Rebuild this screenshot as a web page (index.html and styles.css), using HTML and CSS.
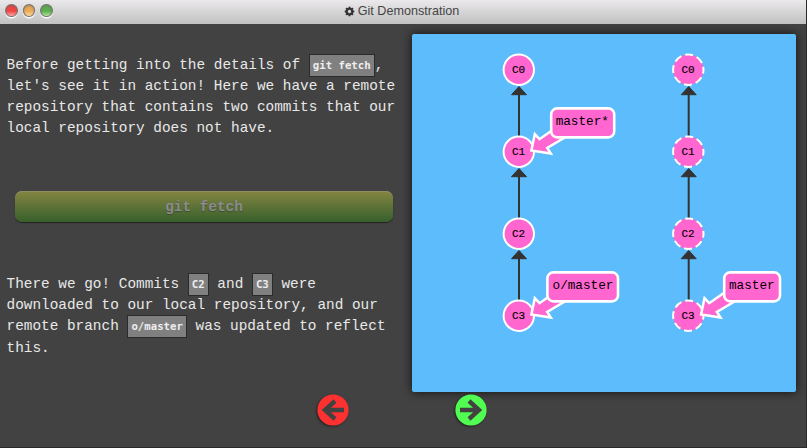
FILE: index.html
```html
<!DOCTYPE html>
<html lang="en">
<head>
<meta charset="utf-8">
<title>Git Demonstration</title>
<link rel="stylesheet" href="styles.css">
</head>
<body>
<div class="window">
  <header class="titlebar">
    <div class="lights"><i class="light red"></i><i class="light amber"></i><i class="light green"></i></div>
    <h1 class="title">
      <svg class="gear" viewBox="-6 -6 12 12"><circle r="3" fill="none" stroke="#333" stroke-width="2.4"/><path d="M0-5.2V-3M0 3V5.2M-5.2 0H-3M3 0H5.2M-3.7-3.7L-2.3-2.3M2.3 2.3L3.7 3.7M3.7-3.7L2.3-2.3M-2.3 2.3L-3.7 3.7" stroke="#333" stroke-width="2.2"/></svg>
      <span>Git Demonstration</span>
    </h1>
  </header>
  <main class="content">
    <section class="lesson">
      <p class="before">Before getting into the details of <code>git fetch</code>,<br>let's see it in action! Here we have a remote<br>repository that contains two commits that our<br>local repository does not have.</p>
      <button class="command">git fetch</button>
      <p class="after">There we go! Commits <code>C2</code> and <code>C3</code> were<br>downloaded to our local repository, and our<br>remote branch <code>o/master</code> was updated to reflect<br>this.</p>
    </section>
    <svg class="graph" viewBox="412 34 384 358">
      <defs>
        <g id="edge"><path d="M0 24V67" stroke="#333" stroke-width="2"/><path d="M0 16.8L7.5 25H-7.5Z" fill="#333" stroke="#333" stroke-linejoin="round"/></g>
        <path id="pointer" d="M12.4-1.2L15.8-17.5L20.5-12.5L37-24L47-15L28.2-3.8L31.8 1.8Z"/>
      </defs>
      <use href="#edge" x="519" y="69.7"/><use href="#edge" x="519" y="151.7"/><use href="#edge" x="519" y="233.7"/>
      <use href="#edge" x="688.7" y="69.7"/><use href="#edge" x="688.7" y="151.7"/><use href="#edge" x="688.7" y="233.7"/>
      <g class="shape">
        <circle cx="518.8" cy="69.7" r="15.2"/><circle cx="518.8" cy="151.7" r="15.2"/><circle cx="518.8" cy="233.7" r="15.2"/><circle cx="518.8" cy="315.7" r="15.2"/>
      </g>
      <g class="shape remote">
        <circle cx="688.3" cy="69.7" r="15.2"/><circle cx="688.3" cy="151.7" r="15.2"/><circle cx="688.3" cy="233.7" r="15.2"/><circle cx="688.3" cy="315.7" r="15.2"/>
      </g>
      <g class="shape pointers">
        <use href="#pointer" x="519" y="151.7"/><use href="#pointer" x="519" y="315.7"/><use href="#pointer" x="688.7" y="315.7"/>
      </g>
      <g class="shape tag">
        <rect x="551.2" y="108.4" width="63" height="29" rx="6"/><rect x="547.4" y="272.4" width="70.6" height="29" rx="6"/><rect x="724.2" y="272.4" width="55.8" height="29" rx="6"/>
      </g>
      <g class="id">
        <text x="518.5" y="73.3">C0</text><text x="518.5" y="155.3">C1</text><text x="518.5" y="237.3">C2</text><text x="518.5" y="319.3">C3</text>
        <text x="688" y="73.3">C0</text><text x="688" y="155.3">C1</text><text x="688" y="237.3">C2</text><text x="688" y="319.3">C3</text>
      </g>
      <g class="name"><text x="582.3" y="125.3">master*</text><text x="583" y="289.3">o/master</text><text x="751.8" y="289.3">master</text></g>
    </svg>
    <nav class="pager">
      <svg class="arrow prev" viewBox="-16 -16 32 32"><circle r="15.6"/><path d="M11 0H-8M2-9L-8 0L2 9"/></svg>
      <svg class="arrow next" viewBox="-16 -16 32 32"><circle r="15.6"/><path d="M-11 0H8M-2-9L8 0L-2 9"/></svg>
    </nav>
  </main>
</div>
</body>
</html>
```

FILE: styles.css
```css
* { box-sizing: border-box; }
body { margin: 0; background: #292929; }
.window { width: 806px; height: 447px; background: #424242; overflow: hidden; }
.titlebar { height: 24px; display: grid; grid-template-columns: 1fr auto 1fr; background: linear-gradient(#ebe9eb, #c1c1c1); }
.lights { display: flex; gap: 5px; padding: 4px 0 0 5px; }
.light { width: 12.5px; height: 13px; border-radius: 50%; border: 1.5px solid #7a7070; box-shadow: 0 1.5px 1px #fff, inset 0 1px 2px #6668; }
.red { background: linear-gradient(#ef4545 55%, #ffa7a4); }
.amber { background: linear-gradient(#e9ac57 55%, #ffdc98); }
.green { background: linear-gradient(#5cae50 55%, #afe79a); }
.title { margin: 0; padding-right: 3px; display: flex; align-items: center; gap: 3px; height: 22px; font: 12.6px "Liberation Sans", Arial, sans-serif; color: #444; }
.gear { width: 11px; height: 11px; }
.content { display: grid; grid-template-columns: 412px 384px; grid-template-rows: 368px 55px; }
.lesson { display: flex; flex-direction: column; padding: 31px 0 0 6.5px; font: 14.4px/21px "Courier New", "Liberation Mono", monospace; color: #e8e8e8; white-space: nowrap; }
.lesson p { margin: 0; height: 84px; }
code { display: inline-block; height: 23px; margin: -1px 0; padding: 0 3px; border: 1px solid #2b2b2b; background: #808080; color: #eee; font: bold 10.7px/21px "DejaVu Sans Mono", monospace; vertical-align: middle; }
.command { width: 378px; height: 31px; margin: 52px 0 52px 8.5px; padding: 0; border: 0; border-radius: 7px; background: linear-gradient(#848541, #37602c); box-shadow: 0 1px 1px #222, inset 0 1px #8f8f60; font: bold 14.4px "Courier New", "Liberation Mono", monospace; color: #8b8b8b; text-shadow: 0 1px 1px #3338; }
.graph { margin-top: 10px; width: 384px; height: 358px; border-radius: 2px; background: #5cbcfc; box-shadow: 0 0 10px #111; }
.shape { fill: #ff66d0; stroke: #fff; stroke-width: 2; }
.remote { stroke-dasharray: 8 4; stroke-dashoffset: 4; }
.pointers { stroke-width: 2.5; }
.tag { stroke-width: 2.6; }
.graph text { font-family: "Courier New", "Liberation Mono", monospace; text-anchor: middle; fill: #000; }
.id text { font-size: 11px; stroke: #000; stroke-width: .15; }
.name text { font-size: 12.7px; }
.pager { grid-column: 1 / 3; display: flex; gap: 106.5px; padding: 2px 0 0 316.5px; }
.arrow { width: 32px; height: 32px; filter: drop-shadow(-1px 1px 1px #222); }
.arrow path { fill: none; stroke: #424242; stroke-width: 4.4; }
.prev { fill: #fe3131; }
.next { fill: #50fd50; }
```
